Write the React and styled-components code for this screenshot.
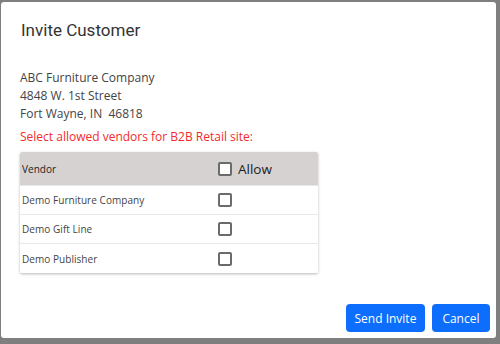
import React from "react";
import styled, { createGlobalStyle } from "styled-components";

const Global = createGlobalStyle`
  html, body { margin: 0; padding: 0; }
  body {
    background: #7f7f7f;
    font-family: "Open Sans", "Noto Sans", sans-serif;
    width: 500px;
    height: 344px;
    overflow: hidden;
  }
`;

const Backdrop = styled.div`
  width: 500px;
  height: 344px;
  padding: 2px 4px 0 1px;
  box-sizing: border-box;
`;

const Dialog = styled.div`
  background: #fff;
  width: 495px;
  height: 336px;
  border-radius: 3px;
  box-sizing: border-box;
  display: flex;
  flex-direction: column;
`;

const Title = styled.h1`
  margin: 0;
  padding: 17px 0 0 20px;
  font-family: Roboto, "Noto Sans", sans-serif;
  font-weight: 400;
  font-size: 17px;
  line-height: 22px;
  color: #333;
`;

const Body = styled.div`
  padding: 28px 0 0 19px;
  flex: 1;
`;

const Address = styled.div`
  font-size: 12px;
  line-height: 18px;
  color: #444;
`;

const Notice = styled.div`
  margin-top: 5px;
  font-size: 12px;
  line-height: 18px;
  color: #f52b2b;
`;

const Table = styled.div`
  margin-top: 6px;
  width: 298px;
  box-shadow: 0 1px 3px rgba(0, 0, 0, 0.28);
  border-radius: 2px;
  overflow: hidden;
`;

const Row = styled.div`
  display: grid;
  grid-template-columns: 198px 1fr;
  align-items: center;
  height: ${(p) => (p.$head ? 34 : 29)}px;
  background: ${(p) => (p.$head ? "#d6d2d2" : "#fff")};
  border-bottom: ${(p) => (p.$last ? "none" : "1px solid #e8e8e8")};
  box-sizing: border-box;
`;

const VendorCell = styled.div`
  padding-left: 2px;
  font-size: 10px;
  letter-spacing: 0.05px;
  color: ${(p) => (p.$head ? "#222" : "#444")};
`;

const AllowCell = styled.div`
  display: flex;
  align-items: center;
  gap: 6px;
  font-size: 13.5px;
  color: #222;
`;

const Box = styled.span`
  display: inline-block;
  width: 14px;
  height: 14px;
  box-sizing: border-box;
  border: 2px solid #6b6b6b;
  border-radius: 2px;
  background: #fff;
`;

const Footer = styled.div`
  display: flex;
  justify-content: flex-end;
  gap: 7px;
  padding: 0 6px 6px 0;
`;

const Button = styled.button`
  height: 28px;
  padding: 0 ${(p) => p.$pad}px;
  border: none;
  border-radius: 4px;
  background: #0d6efd;
  color: #fff;
  font-family: "Open Sans", "Noto Sans", sans-serif;
  font-size: 12px;
  cursor: pointer;
`;

const vendors = ["Demo Furniture Company", "Demo Gift Line", "Demo Publisher"];

export default function App() {
  return (
    <>
      <Global />
      <Backdrop>
        <Dialog>
          <Title>Invite Customer</Title>
          <Body>
            <Address>
              ABC Furniture Company
              <br />
              4848 W. 1st Street
              <br />
              Fort Wayne, IN&nbsp; 46818
            </Address>
            <Notice>Select allowed vendors for B2B Retail site:</Notice>
            <Table>
              <Row $head>
                <VendorCell $head>Vendor</VendorCell>
                <AllowCell>
                  <Box />
                  Allow
                </AllowCell>
              </Row>
              {vendors.map((v, i) => (
                <Row key={v} $last={i === vendors.length - 1}>
                  <VendorCell>{v}</VendorCell>
                  <AllowCell>
                    <Box />
                  </AllowCell>
                </Row>
              ))}
            </Table>
          </Body>
          <Footer>
            <Button $pad={8.5}>Send Invite</Button>
            <Button $pad={10.5}>Cancel</Button>
          </Footer>
        </Dialog>
      </Backdrop>
    </>
  );
}
